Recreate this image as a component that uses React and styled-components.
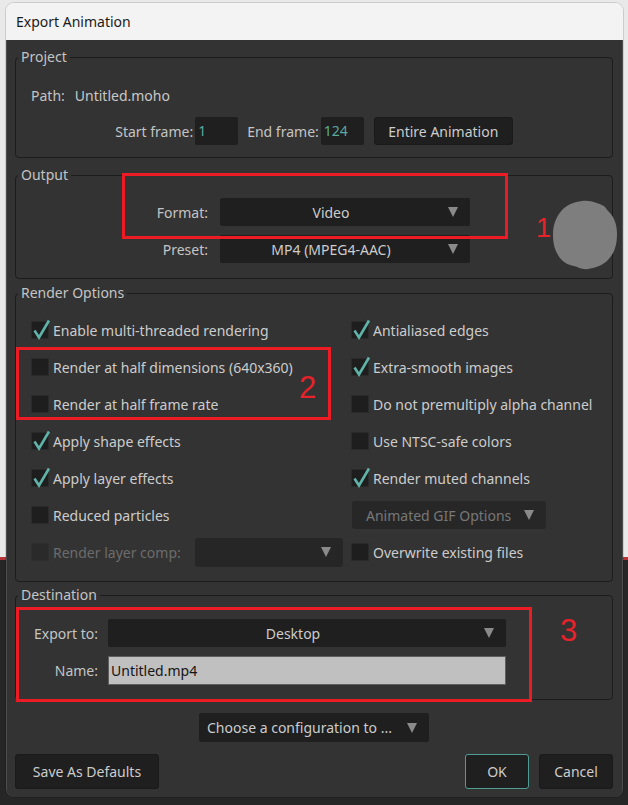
import styled, { createGlobalStyle } from "styled-components";

const GlobalStyle = createGlobalStyle`
  html, body { margin: 0; padding: 0; }
  body {
    width: 628px;
    height: 805px;
    overflow: hidden;
    background: linear-gradient(to bottom, #e9e9e9 0, #e9e9e9 557px, #b8343a 557px, #b8343a 560px, #262626 560px);
    font-family: "Noto Sans", "Open Sans", sans-serif;
  }
`;

const leftOptions = [
  { label: "Enable multi-threaded rendering", checked: true },
  { label: "Render at half dimensions (640x360)", checked: false },
  { label: "Render at half frame rate", checked: false },
  { label: "Apply shape effects", checked: true },
  { label: "Apply layer effects", checked: true },
  { label: "Reduced particles", checked: false },
];

const rightOptions = [
  { label: "Antialiased edges", checked: true },
  { label: "Extra-smooth images", checked: true },
  { label: "Do not premultiply alpha channel", checked: false },
  { label: "Use NTSC-safe colors", checked: false },
  { label: "Render muted channels", checked: true },
];

const Check = ({ checked, disabled }) => (
  <CheckBox $disabled={disabled}>
    {checked && (
      <CheckMark viewBox="0 0 20 22">
        <path d="M3.5 11.5 L8 18.5 L18 1.5" />
      </CheckMark>
    )}
  </CheckBox>
);

const Option = ({ label, checked }) => (
  <OptionRow>
    <Check checked={checked} />
    <OptionText>{label}</OptionText>
  </OptionRow>
);

const Arrow = () => <ArrowGlyph $color="#8a8a8a" />;

const App = () => {
  return (
    <Frame>
      <GlobalStyle />
      <Dialog>
        <TitleBar>Export Animation</TitleBar>
        <Body>
          <Group $mt={0}>
            <Legend>Project</Legend>
            <PathRow>
              <Label>Path:</Label>
              <PathValue>Untitled.moho</PathValue>
            </PathRow>
            <FrameRow>
              <Label>Start frame:</Label>
              <FrameInput>1</FrameInput>
              <Label $ml={9}>End frame:</Label>
              <FrameInput>124</FrameInput>
              <Button $ml={10} $w={139}>Entire Animation</Button>
            </FrameRow>
          </Group>

          <Group $mt={7}>
            <Legend>Output</Legend>
            <FormGrid $label={192} $field={250} $gap={12} $pad="13px 0 15px 0">
              <FieldLabel>Format:</FieldLabel>
              <Select>
                <SelectValue>Video</SelectValue>
                <Arrow />
              </Select>
              <FieldLabel>Preset:</FieldLabel>
              <Select>
                <SelectValue>MP4 (MPEG4-AAC)</SelectValue>
                <Arrow />
              </Select>
            </FormGrid>
          </Group>

          <Group $mt={4}>
            <Legend>Render Options</Legend>
            <OptionsGrid>
              {leftOptions.map((opt, idx) => (
                <>
                  <Option key={"l" + idx} {...opt} />
                  {idx < 5 ? (
                    <Option key={"r" + idx} {...rightOptions[idx]} />
                  ) : (
                    <GifSelect key="gif">
                      <GifText>Animated GIF Options</GifText>
                      <ArrowGlyph $color="#8a8a8a" />
                    </GifSelect>
                  )}
                </>
              ))}
              <OptionRow>
                <Check disabled />
                <OptionText $disabled>Render layer comp:</OptionText>
                <CompSelect>
                  <ArrowGlyph $color="#8a8a8a" />
                </CompSelect>
              </OptionRow>
              <Option label="Overwrite existing files" checked={false} />
            </OptionsGrid>
          </Group>

          <Group $mt={3}>
            <Legend>Destination</Legend>
            <FormGrid $label={67} $field={398} $gap={10} $pad="14px 0 14px 0" $lpad={15}>
              <FieldLabel>Export to:</FieldLabel>
              <Select>
                <SelectValue>Desktop</SelectValue>
                <Arrow />
              </Select>
              <FieldLabel>Name:</FieldLabel>
              <NameInput>Untitled.mp4</NameInput>
            </FormGrid>
          </Group>

          <ConfigSelect>
            <ConfigText>Choose a configuration to ...</ConfigText>
            <Arrow />
          </ConfigSelect>

          <ButtonRow>
            <Button $h={35} $w={144}>Save As Defaults</Button>
            <Spacer />
            <Button $h={35} $w={64} $primary>OK</Button>
            <Button $h={35} $w={74} $ml={10}>Cancel</Button>
          </ButtonRow>

          <RedFrame $x={115} $y={133} $w={386} $h={66} />
          <RedNumber $x={529} $y={172} $size={27}>1</RedNumber>
          <Blob viewBox="0 0 66 70" $x={545} $y={160}>
            <path d="M30 1 C40 0 47 4 52 6 C54 8 55 10 57 12 C63 18 65 26 65 34 C65 46 62 54 55 61 C49 66 43 68 36 69 C30 70 26 67 22 66 C16 65 10 62 6 55 C2 48 1 42 1 34 C1 24 5 15 11 9 C17 4 22 2 30 1 Z" />
          </Blob>

          <RedFrame $x={9} $y={307} $w={315} $h={73} />
          <RedNumber $x={292} $y={332} $size={31}>2</RedNumber>

          <RedFrame $x={9} $y={567} $w={516} $h={95} />
          <RedNumber $x={553} $y={575} $size={31}>3</RedNumber>
        </Body>
      </Dialog>
    </Frame>
  );
};

export default App;

const Frame = styled.div`
  padding: 3px 5px 0 6px;
`;

const Dialog = styled.div`
  width: 617px;
  height: 794px;
  display: flex;
  flex-direction: column;
  border-radius: 8px;
  overflow: hidden;
  box-shadow: 0 0 0 1px rgba(0, 0, 0, 0.12);
`;

const TitleBar = styled.div`
  height: 37px;
  flex-shrink: 0;
  display: flex;
  align-items: center;
  padding-left: 10px;
  background: #f3f3f3;
  color: #1b1b1b;
  font-size: 14px;
`;

const Body = styled.div`
  position: relative;
  flex: 1;
  display: flex;
  flex-direction: column;
  padding: 7px 9px 8px 8px;
  background: #333333;
  border: 1px solid #4d4d4d;
  border-top: none;
  border-radius: 0 0 8px 8px;
  color: #cccccc;
  font-size: 14px;
`;

const Group = styled.fieldset`
  margin: ${(p) => p.$mt}px 0 0 0;
  padding: 0;
  min-width: 0;
  border: 1px solid #1c1c1c;
  border-radius: 4px;
`;

const Legend = styled.legend`
  margin-left: 2px;
  padding: 0 3px;
  line-height: 20px;
  font-size: 14px;
  color: #c4c4c4;
`;

const PathRow = styled.div`
  display: flex;
  align-items: center;
  height: 20px;
  margin-top: 18px;
  padding-left: 15px;
`;

const Label = styled.span`
  margin-left: ${(p) => p.$ml || 0}px;
  margin-right: 2px;
  color: #c4c4c4;
  white-space: nowrap;
`;

const PathValue = styled.span`
  margin-left: 8px;
  color: #c8c8c8;
`;

const FrameRow = styled.div`
  display: flex;
  align-items: center;
  justify-content: center;
  height: 28px;
  margin: 12px 0 12px 0;
`;

const FrameInput = styled.div`
  width: 43px;
  height: 28px;
  box-sizing: border-box;
  padding-left: 3px;
  line-height: 28px;
  background: #1f1f1f;
  border-radius: 2px;
  color: #5aa99f;
`;

const Button = styled.div`
  display: flex;
  align-items: center;
  justify-content: center;
  box-sizing: border-box;
  width: ${(p) => p.$w}px;
  height: ${(p) => p.$h || 28}px;
  margin-left: ${(p) => p.$ml || 0}px;
  background: #1f1f1f;
  border: 1px solid ${(p) => (p.$primary ? "#4f9c93" : "#1a1a1a")};
  border-radius: 3px;
  color: #cccccc;
  white-space: nowrap;
`;

const FormGrid = styled.div`
  display: grid;
  grid-template-columns: ${(p) => p.$label}px ${(p) => p.$field}px;
  column-gap: ${(p) => p.$gap}px;
  row-gap: 9px;
  align-items: center;
  padding: ${(p) => p.$pad};
  padding-left: ${(p) => p.$lpad || 0}px;
`;

const FieldLabel = styled.span`
  text-align: right;
  color: #c4c4c4;
  white-space: nowrap;
`;

const Select = styled.div`
  display: flex;
  align-items: center;
  height: 28px;
  background: #1f1f1f;
  border-radius: 2px;
`;

const SelectValue = styled.span`
  flex: 1;
  text-align: center;
  color: #cccccc;
`;

const ArrowGlyph = styled.span`
  width: 0;
  height: 0;
  margin: 0 12px 0 6px;
  border-left: 5px solid transparent;
  border-right: 5px solid transparent;
  border-top: 10px solid ${(p) => p.$color};
`;

const OptionsGrid = styled.div`
  display: grid;
  grid-template-columns: 320px 1fr;
  grid-auto-rows: 28px;
  row-gap: 9px;
  align-items: center;
  padding: 13px 0 15px 15px;
`;

const OptionRow = styled.div`
  display: flex;
  align-items: center;
  height: 28px;
`;

const CheckBox = styled.div`
  position: relative;
  width: 18px;
  height: 18px;
  flex-shrink: 0;
  box-sizing: border-box;
  background: ${(p) => (p.$disabled ? "#2a2a2a" : "#1e1e1e")};
  border: 1px solid ${(p) => (p.$disabled ? "#2e2e2e" : "#2a2a2a")};
  border-radius: 1px;
`;

const CheckMark = styled.svg`
  position: absolute;
  left: -1px;
  top: -3px;
  width: 20px;
  height: 22px;
  fill: none;
  stroke: #5fb3a9;
  stroke-width: 2.6;
  stroke-linecap: butt;
  stroke-linejoin: miter;
`;

const OptionText = styled.span`
  margin-left: 4px;
  color: ${(p) => (p.$disabled ? "#6c6c6c" : "#cccccc")};
  white-space: nowrap;
`;

const GifSelect = styled.div`
  display: flex;
  align-items: center;
  justify-content: space-between;
  width: 194px;
  height: 28px;
  margin-left: 1px;
  background: #272727;
  border-radius: 3px;
`;

const GifText = styled.span`
  padding-left: 14px;
  color: #777777;
  white-space: nowrap;
`;

const CompSelect = styled.div`
  display: flex;
  align-items: center;
  justify-content: flex-end;
  width: 148px;
  height: 29px;
  margin-left: auto;
  margin-right: 8px;
  background: #262626;
  border-radius: 3px;
`;

const NameInput = styled.div`
  height: 29px;
  box-sizing: border-box;
  padding-left: 2px;
  line-height: 27px;
  background: #c0c0c0;
  border: 1px solid #5e5e5e;
  color: #151515;
`;

const ConfigSelect = styled.div`
  display: flex;
  align-items: center;
  justify-content: space-between;
  align-self: center;
  width: 230px;
  height: 29px;
  margin-top: 13px;
  background: #1f1f1f;
  border-radius: 2px;
`;

const ConfigText = styled.span`
  padding-left: 8px;
  color: #cccccc;
  white-space: nowrap;
`;

const ButtonRow = styled.div`
  display: flex;
  align-items: center;
  margin-top: 12px;
`;

const Spacer = styled.div`
  flex: 1;
`;

const RedFrame = styled.div`
  position: absolute;
  left: ${(p) => p.$x}px;
  top: ${(p) => p.$y}px;
  width: ${(p) => p.$w}px;
  height: ${(p) => p.$h}px;
  box-sizing: border-box;
  border: 3px solid #ed1c24;
  pointer-events: none;
`;

const RedNumber = styled.span`
  position: absolute;
  left: ${(p) => p.$x}px;
  top: ${(p) => p.$y}px;
  font-family: "Liberation Sans", Arial, sans-serif;
  font-size: ${(p) => p.$size}px;
  line-height: 32px;
  color: #e8222a;
`;

const Blob = styled.svg`
  position: absolute;
  left: ${(p) => p.$x}px;
  top: ${(p) => p.$y}px;
  width: 66px;
  height: 70px;
  fill: #7e7e7e;
`;
